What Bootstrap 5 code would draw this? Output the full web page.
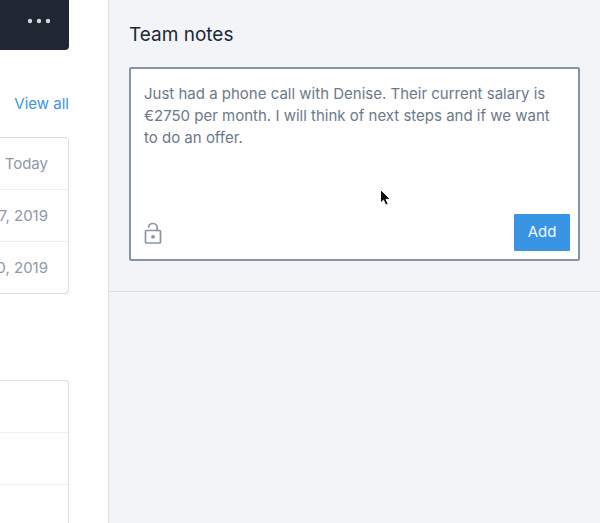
<!DOCTYPE html>
<html lang="en">
<head>
<meta charset="utf-8">
<meta name="viewport" content="width=device-width, initial-scale=1">
<title>Team notes</title>
<link href="https://cdn.jsdelivr.net/npm/bootstrap@5.3.0/dist/css/bootstrap.min.css" rel="stylesheet">
<style>
body { font-family: Inter, "Liberation Sans", sans-serif; font-size: 15px; line-height: 22px; background: #f2f4f8; color: #202833; }
.record-pane { flex: 0 0 109px; background: #fefefe; border-right: 1px solid #dde1e6; }
.toolbar-dark { height: 50px; background: #202733; border-radius: 0 0 4px 0; margin-right: 39px; padding: 0 18px 9px 0; }
.view-link { color: #3d96dc; margin: 43px 39px 22px 0; }
.record-list { margin-right: 39px; border: 1px solid #d9dee4; border-left: 0; border-radius: 0 4px 4px 0; }
.record-list li { height: 52px; padding-right: 20px; color: #8d99a8; white-space: nowrap; }
.record-list li:first-child { height: 51px; }
.record-list li + li { border-top: 1px solid #edf1f5; }
.record-list-next { margin-top: 86px; }
.notes-section { padding: 23px 20px 30px; border-bottom: 1px solid #dce0e6; }
.notes-title { font-size: 19px; line-height: 24px; font-weight: 400; margin-bottom: 20px; }
.note-box { background: #fefefe; border: 2px solid #8593a2; border-radius: 2px; padding: 14px 8px 8px 13px; }
.note-text { height: 131px; border: 0; outline: 0; resize: none; padding: 0 16px 0 0; background: transparent; color: #6c7988; overflow: hidden; }
.lock-btn { color: #8a96a5; line-height: 0; }
.add-btn { height: 37px; width: 56px; padding: 0; font-size: 15px; border: 0; border-radius: 1px; background: #3994e4; color: #f3f9fe; }
.pointer { left: 379px; top: 188px; }
</style>
<script src="https://cdn.jsdelivr.net/npm/bootstrap@5.3.0/dist/js/bootstrap.bundle.min.js"></script>
</head>
<body>
<div class="d-flex vh-100 overflow-hidden">
  <div class="record-pane overflow-hidden">
    <div class="toolbar-dark d-flex align-items-center justify-content-end">
      <button type="button" class="btn p-0 border-0 lh-1 d-flex" aria-label="More actions">
        <svg width="24" height="6" viewBox="0 0 24 6" fill="#d3d8df"><circle cx="3" cy="3" r="2.2"/><circle cx="12" cy="3" r="2.2"/><circle cx="21" cy="3" r="2.2"/></svg>
      </button>
    </div>
    <a href="#" class="view-link d-block text-end text-decoration-none">View all</a>
    <ul class="record-list list-unstyled mb-0">
      <li class="d-flex align-items-center justify-content-end">Today</li>
      <li class="d-flex align-items-center justify-content-end">7, 2019</li>
      <li class="d-flex align-items-center justify-content-end">0, 2019</li>
    </ul>
    <ul class="record-list record-list-next list-unstyled mb-0">
      <li></li>
      <li></li>
      <li></li>
    </ul>
  </div>
  <main class="flex-grow-1">
    <section class="notes-section">
      <h1 class="notes-title"><label for="note">Team notes</label></h1>
      <form class="note-box">
        <textarea id="note" class="note-text d-block w-100" spellcheck="false">Just had a phone call with Denise. Their current salary is €2750 per month. I will think of next steps and if we want to do an offer.</textarea>
        <div class="d-flex align-items-center justify-content-between">
          <button type="button" class="lock-btn btn p-0 border-0" aria-label="Note visibility">
            <svg width="18" height="22" viewBox="0 0 18 22" fill="none" stroke="currentColor" stroke-width="1.7" stroke-linecap="round" stroke-linejoin="round"><rect x="1.5" y="8.5" width="15" height="12.5" rx="1"/><path d="M4.5 5A4.4 4.4 0 0 1 13.2 5.6V8.5"/><circle cx="9" cy="14.8" r="1.9" fill="currentColor" stroke="none"/></svg>
          </button>
          <button type="button" class="add-btn btn">Add</button>
        </div>
      </form>
    </section>
  </main>
</div>
<svg class="pointer position-absolute pe-none" width="13" height="19" viewBox="0 0 13 19" aria-hidden="true"><path d="M1.5 1.5V15l3-2.8 2.2 5 2.5-1.1-2.1-4.7h4.3z" fill="#111" stroke="#fff" stroke-width="1"/></svg>
</body>
</html>
